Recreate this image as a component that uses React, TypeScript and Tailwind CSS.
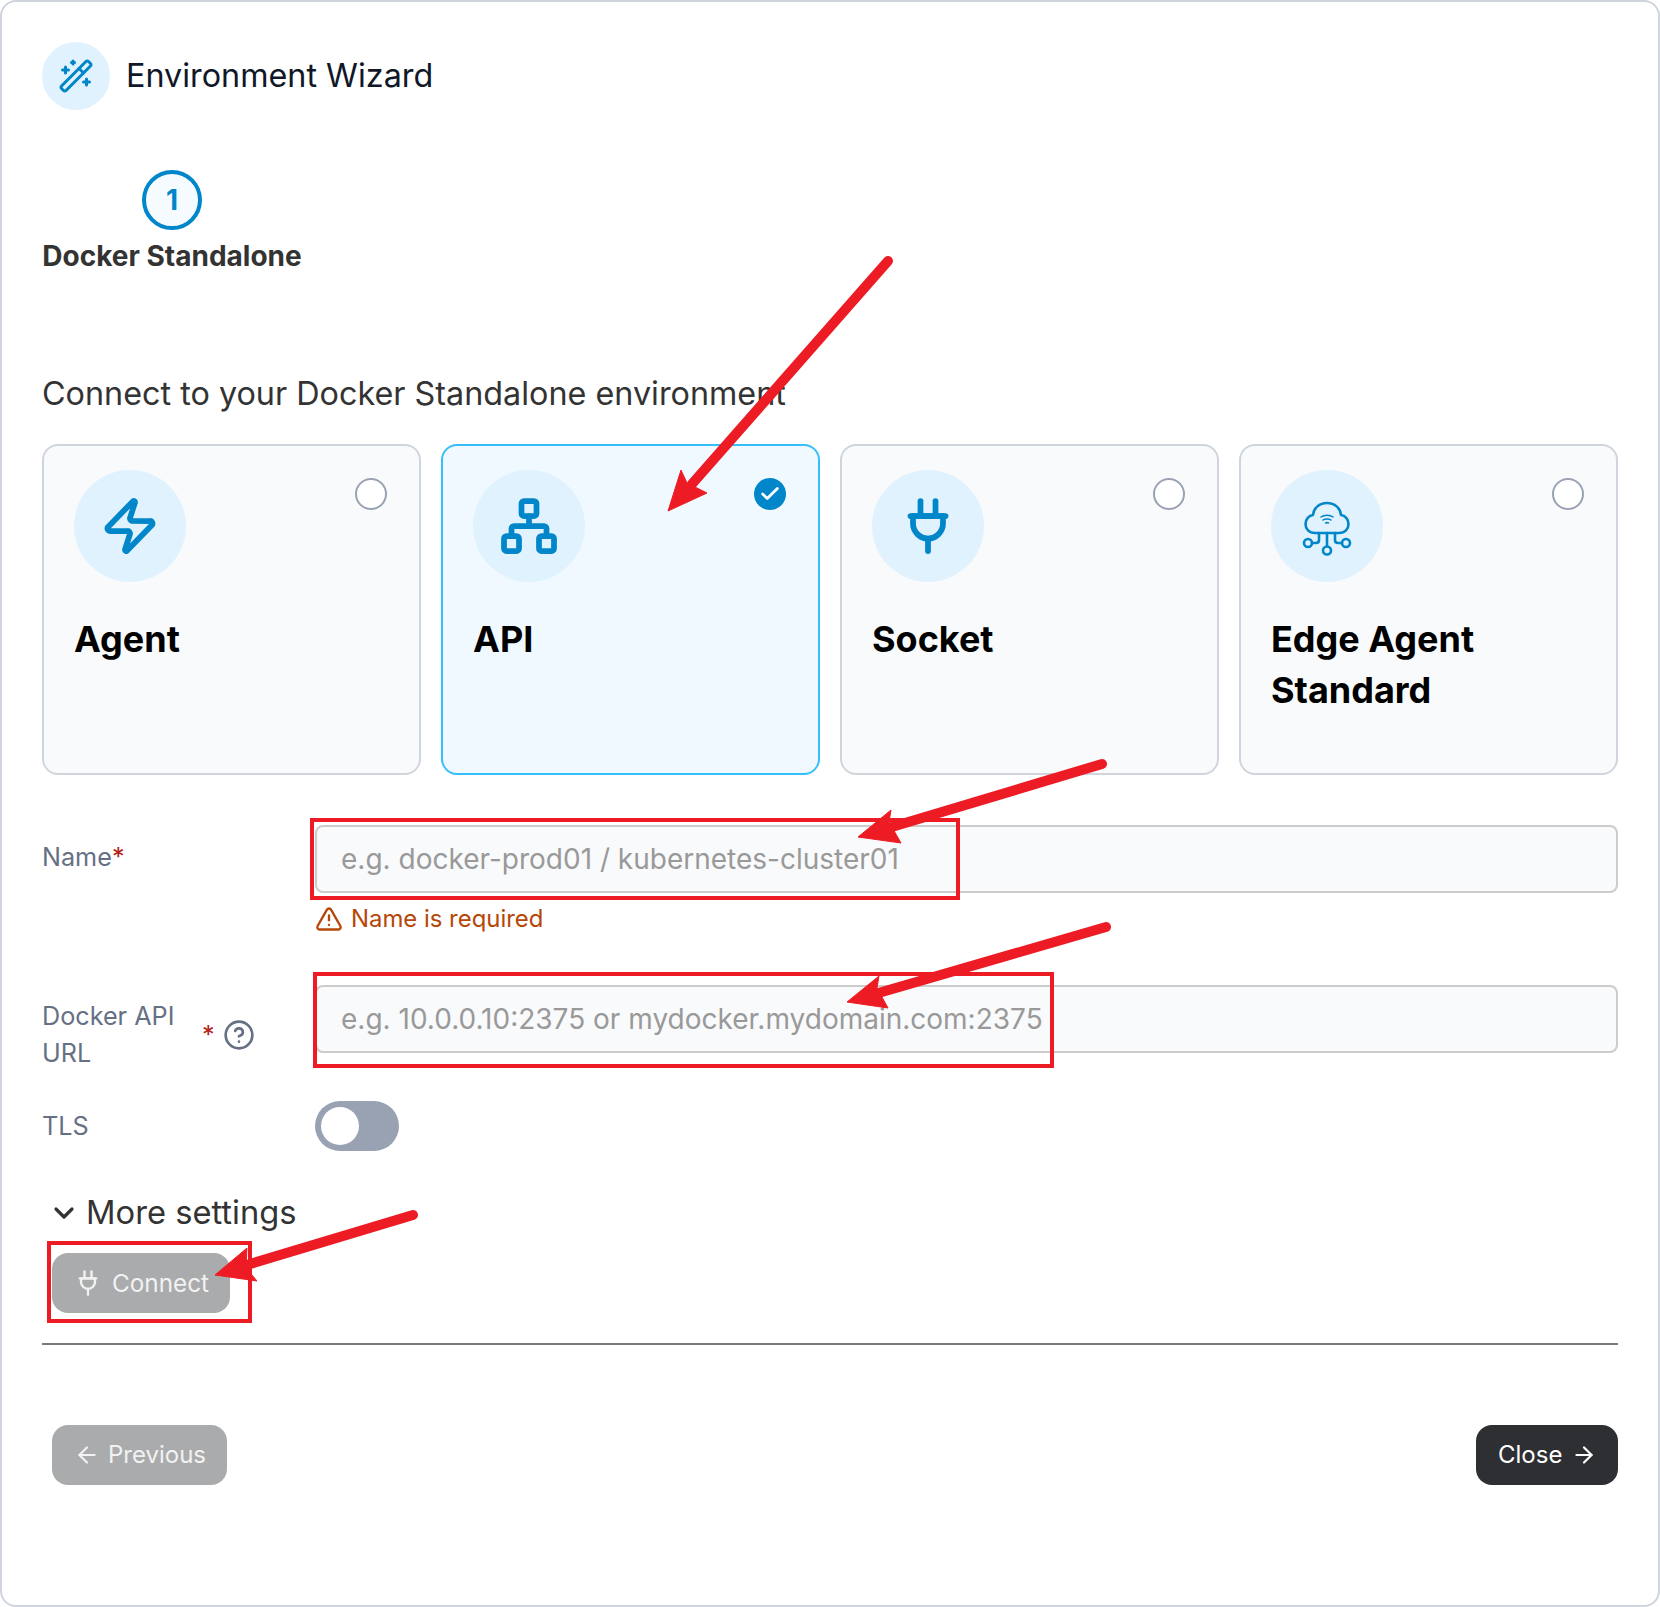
import { WandSparkles, Zap, Network, Plug2, TriangleAlert, CircleHelp, ChevronDown, ArrowLeft, ArrowRight, Check } from "lucide-react";
import type { ReactNode } from "react";

function EdgeIcon() {
  return (
    <svg className="mt-[5px]" width="52" height="56" viewBox="0 0 52 56" fill="none" stroke="#0086c9" strokeWidth="2.6" strokeLinecap="round" strokeLinejoin="round">
      <path d="M14 32 C8 32 4.500 28 4.500 23 C4.500 18 8 14.500 12 14 C12.500 7 18.500 2 26 2 C33.500 2 39.500 7 40 14 C44 14.500 47.500 18 47.500 23 C47.500 28 44 32 38 32 Z" />
      <path d="M20 16 C23 13.500 29 13.500 32 16" strokeWidth="1.5" />
      <path d="M22 19 C24 17.500 28 17.500 30 19" strokeWidth="1.5" />
      <path d="M24.500 22 C25.500 21.500 26.500 21.500 27.500 22" strokeWidth="1.5" />
      <path d="M26 32 V45" />
      <path d="M18 32 V39 C18 41 17 42 15 42 H11" />
      <path d="M34 32 V39 C34 41 35 42 37 42 H41" />
      <circle cx="7" cy="42" r="4" />
      <circle cx="45" cy="42" r="4" />
      <circle cx="26" cy="49.500" r="4" />
    </svg>
  );
}

function Card({ icon, title, selected }: { icon: ReactNode; title: ReactNode; selected?: boolean }) {
  return (
    <div
      className={
        selected
          ? "flex h-[331px] items-start justify-between rounded-2xl border-2 border-[#36bffa] bg-[#f0f9ff] pt-[24px] pr-[32px] pl-[30px]"
          : "flex h-[331px] items-start justify-between rounded-2xl border-2 border-[#d0d5dd] bg-[#f9fafb] pt-[24px] pr-[32px] pl-[30px]"
      }
    >
      <div>
        <div className="flex h-[112px] w-[112px] items-center justify-center rounded-full bg-[#e0f2fe] text-[#0086c9]">{icon}</div>
        <div className="mt-[32px] text-[36px] leading-[51px] font-bold text-black">{title}</div>
      </div>
      {selected ? (
        <div className="mt-[8px] flex h-[32px] w-[32px] shrink-0 items-center justify-center rounded-full bg-[#0086c9]">
          <Check size={22} color="#fff" strokeWidth={3} />
        </div>
      ) : (
        <div className="mt-[8px] h-[32px] w-[32px] shrink-0 rounded-full border-2 border-[#98a2b3] bg-white" />
      )}
    </div>
  );
}

function Field({ placeholder }: { placeholder: string }) {
  return (
    <input
      readOnly
      placeholder={placeholder}
      className="h-[68px] w-full rounded-lg border-2 border-[#cccccc] bg-[#f9fafb] px-[24px] text-[28px] placeholder:text-[#999999]"
    />
  );
}

function Arrows() {
  return (
    <svg className="pointer-events-none absolute top-0 left-0" width="1660" height="1607" viewBox="0 0 1660 1607">
      <g fill="#ed1c24" stroke="#ed1c24" strokeLinejoin="round">
        <line x1="888" y1="261" x2="692" y2="484" strokeWidth="10" strokeLinecap="round" />
        <polygon points="668,511 681,470 687,483 707,493" strokeWidth="1" />
        <line x1="1102" y1="764" x2="885" y2="829" strokeWidth="10" strokeLinecap="round" />
        <polygon points="858,837 891,810 889,822 901,843" strokeWidth="1" />
        <line x1="1106" y1="927" x2="875" y2="994" strokeWidth="10" strokeLinecap="round" />
        <polygon points="847,1002 879,976 877,988 888,1008" strokeWidth="1" />
        <line x1="413" y1="1215" x2="240" y2="1267" strokeWidth="10" strokeLinecap="round" />
        <polygon points="215,1275 247,1248 246,1268 257,1281" strokeWidth="1" />
      </g>
    </svg>
  );
}

export default function App() {
  return (
    <div className="relative h-[1607px] w-[1660px] bg-white font-['Inter',sans-serif]">
      <div className="h-full rounded-2xl border-2 border-[#d0d5dd] bg-white px-[40px] pt-[40px]">
        <div className="flex h-[68px] items-center gap-[16px]">
          <div className="flex h-[68px] w-[68px] items-center justify-center rounded-full bg-[#e0f2fe]">
            <WandSparkles size={36} color="#0086c9" strokeWidth={2} />
          </div>
          <div className="text-[32.35px] leading-[40px] text-[#101828]">Environment Wizard</div>
        </div>

        <div className="mt-[60px] flex w-[260px] flex-col items-center">
          <div className="flex h-[60px] w-[60px] items-center justify-center rounded-full border-[4px] border-[#0086c9] bg-[#f5fbff] text-[28px] font-bold text-[#0086c9]">1</div>
          <div className="mt-[7px] text-[28px] leading-[38px] font-bold whitespace-nowrap text-[#333333]">Docker Standalone</div>
        </div>

        <div className="mt-[97px] text-[32.35px] leading-[44px] text-[#333333]">Connect to your Docker Standalone environment</div>

        <div className="mt-[28px] grid grid-cols-4 gap-[20px]">
          <Card title="Agent" icon={<Zap size={60} strokeWidth={2.3} />} />
          <Card title="API" selected icon={<Network size={60} strokeWidth={2.3} />} />
          <Card title="Socket" icon={<Plug2 size={60} strokeWidth={2.3} />} />
          <Card title="Edge Agent Standard" icon={<EdgeIcon />} />
        </div>

        <div className="mt-[50px] flex">
          <div className="w-[273px] shrink-0 pt-[16px] text-[25.2px] leading-[32px] text-[#667085]">
            Name<span className="text-[#b42318]">*</span>
          </div>
          <div className="min-w-0 flex-1">
            <Field placeholder="e.g. docker-prod01 / kubernetes-cluster01" />
            <div className="mt-[10px] flex items-center gap-[8px] text-[23.9px] leading-[32px] text-[#b54708]">
              <TriangleAlert size={28} strokeWidth={2} />
              <span>Name is required</span>
            </div>
          </div>
        </div>

        <div className="mt-[50px] flex">
          <div className="flex w-[273px] shrink-0 items-center pt-[13px] text-[25.2px] leading-[37px] text-[#667085]">
            <div className="w-[160px]">Docker API URL</div>
            <span className="text-[#b42318]">*</span>
            <CircleHelp className="ml-[8px]" size={32} strokeWidth={2} />
          </div>
          <div className="min-w-0 flex-1">
            <Field placeholder="e.g. 10.0.0.10:2375 or mydocker.mydomain.com:2375" />
          </div>
        </div>

        <div className="mt-[29px] flex items-center">
          <div className="w-[273px] shrink-0 text-[25.2px] leading-[32px] text-[#667085]">TLS</div>
          <div className="flex h-[50px] w-[84px] items-center rounded-full bg-[#98a2b3] pl-[6px]">
            <div className="h-[38px] w-[38px] rounded-full bg-white" />
          </div>
        </div>

        <div className="mt-[42px] flex h-[40px] items-center pl-[6px] text-[32.7px] text-[#333333]">
          <ChevronDown size={32} strokeWidth={2.4} />
          <span className="ml-[6px]">More settings</span>
        </div>

        <div className="mt-[20px] pl-[10px]">
          <button className="flex h-[60px] w-[178px] items-center gap-[10px] rounded-2xl bg-[#aaabac] pl-[22px] text-[24.3px] text-[#f2f2f2]">
            <Plug2 size={28} strokeWidth={2} />
            <span>Connect</span>
          </button>
        </div>

        <div className="mt-[30px] h-[2px] bg-[#7a7a7a]" />

        <div className="mt-[80px] flex justify-between pl-[10px]">
          <button className="flex h-[60px] w-[175px] items-center gap-[8px] rounded-2xl bg-[#aaabac] pl-[22px] text-[24px] text-[#f2f2f2]">
            <ArrowLeft size={26} strokeWidth={2} />
            <span>Previous</span>
          </button>
          <button className="flex h-[60px] w-[142px] items-center gap-[9px] rounded-2xl bg-[#2d2f33] pl-[22px] text-[24px] text-white">
            <span>Close</span>
            <ArrowRight size={26} strokeWidth={2} />
          </button>
        </div>
      </div>

      <div className="pointer-events-none absolute top-[818px] left-[310px] h-[82px] w-[650px] border-[4px] border-[#ed1c24]" />
      <div className="pointer-events-none absolute top-[972px] left-[313px] h-[96px] w-[741px] border-[4px] border-[#ed1c24]" />
      <div className="pointer-events-none absolute top-[1241px] left-[47px] h-[82px] w-[205px] border-[4px] border-[#ed1c24]" />
      <Arrows />
    </div>
  );
}
